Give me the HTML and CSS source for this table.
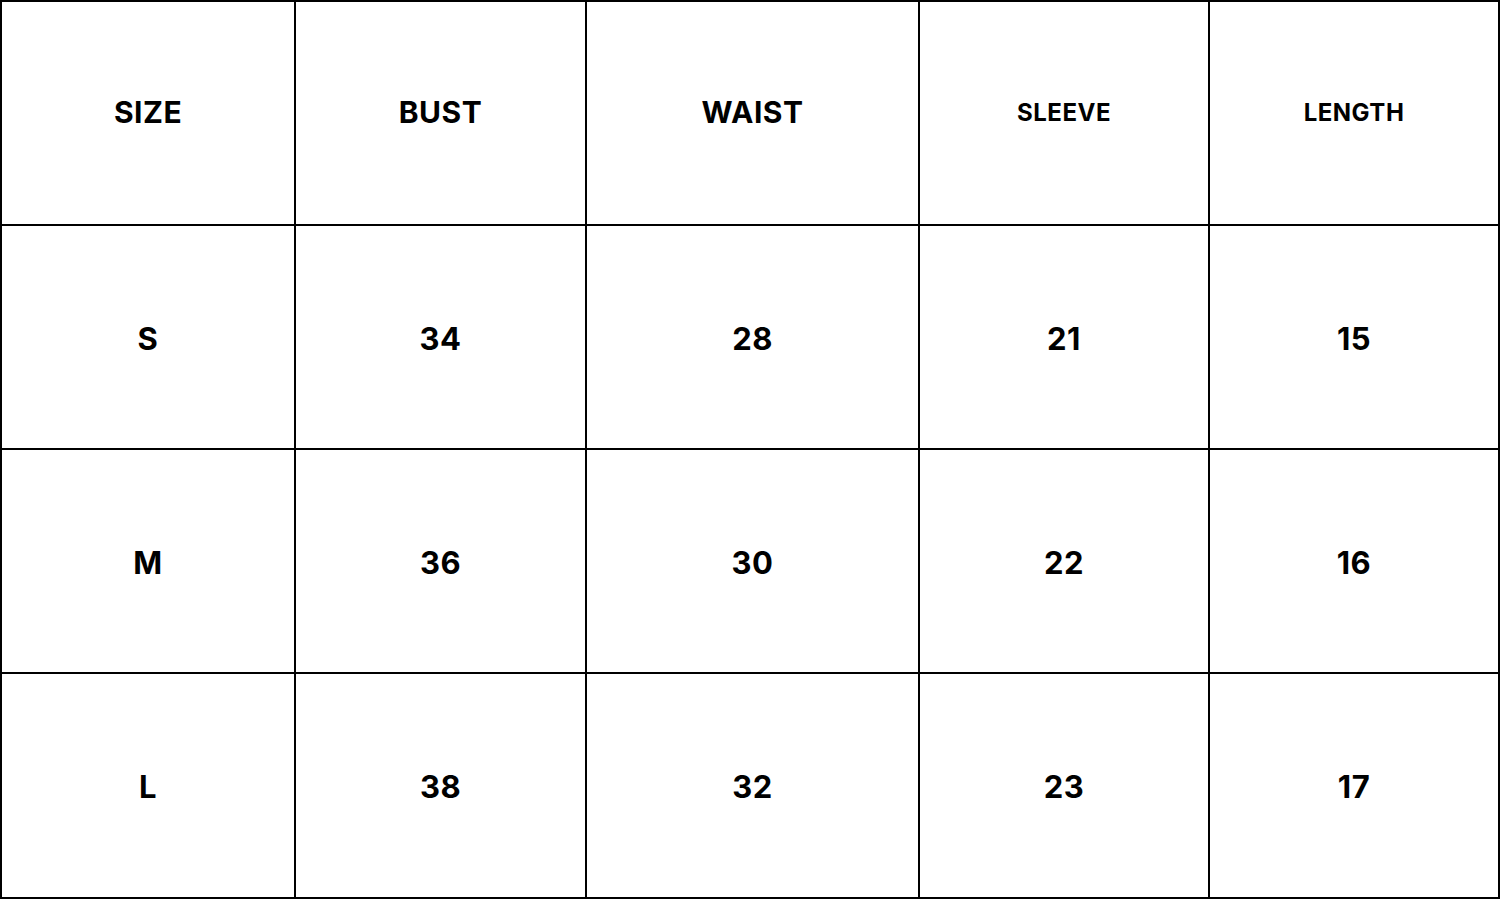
FILE: index.html
```html
<!DOCTYPE html>
<html>
<head>
<meta charset="utf-8">
<link rel="stylesheet" href="styles.css">
</head>
<body>
<div class="chart">
  <div class="cell head">SIZE</div>
  <div class="cell head">BUST</div>
  <div class="cell head">WAIST</div>
  <div class="cell head small">SLEEVE</div>
  <div class="cell head small">LENGTH</div>

  <div class="cell">S</div>
  <div class="cell">34</div>
  <div class="cell">28</div>
  <div class="cell">21</div>
  <div class="cell">15</div>

  <div class="cell">M</div>
  <div class="cell">36</div>
  <div class="cell">30</div>
  <div class="cell">22</div>
  <div class="cell">16</div>

  <div class="cell">L</div>
  <div class="cell">38</div>
  <div class="cell">32</div>
  <div class="cell">23</div>
  <div class="cell">17</div>
</div>
</body>
</html>
```
FILE: styles.css
```css
html, body {
  margin: 0;
  padding: 0;
  background: #ffffff;
}
.chart {
  width: 1500px;
  height: 899px;
  box-sizing: border-box;
  border: 2px solid #000;
  background: #000;
  display: grid;
  grid-template-columns: 292px 289px 331px 288px 288px;
  grid-template-rows: 222px 222px 222px 223px;
  gap: 2px;
}
.cell {
  background: #fff;
  display: flex;
  align-items: center;
  justify-content: center;
  font-family: "Inter", "Liberation Sans", sans-serif;
  font-weight: 700;
  font-size: 31px;
  color: #000;
  letter-spacing: 0.5px;
  padding-top: 2px;
}
.head {
  font-size: 30px;
  padding-top: 0;
  padding-bottom: 2px;
}
.small {
  font-size: 24px;
}
```
